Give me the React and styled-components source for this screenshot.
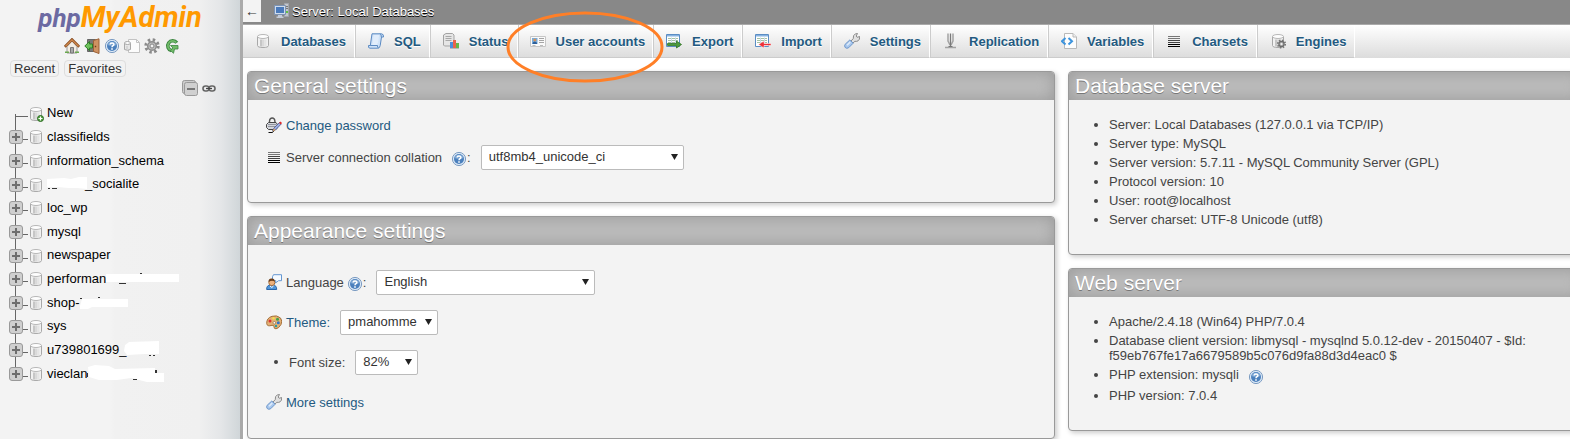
import React from "react";
import styled, { createGlobalStyle } from "styled-components";

const GlobalStyle = createGlobalStyle`
  * { box-sizing: border-box; }
  body {
    margin: 0;
    background: #fff;
    color: #444;
    font: 13px/15px "Liberation Sans", Arial, sans-serif;
  }
  ul { list-style: none; margin: 0; padding: 0; }
  a { text-decoration: none; color: #235a81; }
  svg { display: block; flex: none; }
`;

/* ---------- Icons (16 x 16 unless noted) ---------- */

const Svg = ({ children, w = 16, h = 16 }) => (
  <svg width={w} height={h} viewBox={`0 0 ${w} ${h}`} aria-hidden="true">
    {children}
  </svg>
);

const Cylinder = () => (
  <>
    <path d="M2.500 3.500v9c0 1.400 2.200 2 5.500 2s5.500-.6 5.500-2v-9" fill="#f1f1f1" stroke="#a8a8a8" />
    <path d="M5 6.500h2.500V13.500H5z" fill="#c6c6c6" />
    <path d="M7.500 6.500h2V13.500h-2z" fill="#d9d9d9" />
    <path d="M9.500 6.500h2V13h-2z" fill="#e4e4e4" />
    <ellipse cx="8" cy="3.500" rx="5.500" ry="2" fill="#fdfdfd" stroke="#b8b8b8" />
  </>
);

const DatabaseIcon = () => <Svg><Cylinder /></Svg>;

const DatabaseAddIcon = () => (
  <Svg>
    <Cylinder />
    <circle cx="12.500" cy="12.500" r="3" fill="#4f9f3f" stroke="#2f6d25" />
    <path d="M12.500 10.500v4M10.500 12.500h4" stroke="#fff" strokeWidth="1.200" />
  </Svg>
);

const EnginesIcon = () => (
  <Svg>
    <Cylinder />
    <circle cx="11.500" cy="11" r="3.800" fill="none" stroke="#777" strokeWidth="1.600" strokeDasharray="1.500 1.480" />
    <circle cx="11.500" cy="11" r="2.600" fill="#aaa" stroke="#6c6c6c" strokeWidth="1.200" />
    <circle cx="11.500" cy="11" r="1.100" fill="#f3f3f3" />
  </Svg>
);

const HomeIcon = () => (
  <Svg>
    <path d="M3 8.500 8 3l5 5.500V15H3z" fill="#f3ede4" stroke="#999" />
    <path d="M1 13.500h4v1.500H1zM11 13.500h4v1.500h-4z" fill="#6aa84f" />
    <path d="M6.500 9.500h3V15h-3z" fill="#a8a8a8" stroke="#777" />
    <path d="M.8 8.800 8 1.500l7.200 7.300" fill="none" stroke="#8a4d20" strokeWidth="2.600" />
    <path d="M1.500 8.200 8 1.800l6.500 6.400" fill="none" stroke="#d08a4e" strokeWidth="1.200" />
  </Svg>
);

const ExitIcon = () => (
  <Svg>
    <path d="M3.500 1.500h8v12h-8z" fill="#777" stroke="#666" />
    <path d="M9.500 2.500 15 .8v14.700l-5.500-2z" fill="#cf9262" stroke="#9b6136" />
    <path d="M10.800 8.500h1.400" stroke="#6b3c18" strokeWidth="1.500" />
    <path d="M.8 8 5.500 3.500V6H8.500v4H5.500v2.500z" fill="#6cc05a" stroke="#2f7d28" />
  </Svg>
);

const HelpIcon = () => (
  <Svg>
    <circle cx="8" cy="8" r="6.600" fill="#dbe8f6" stroke="#7c9cc2" />
    <circle cx="8" cy="8" r="5" fill="#4b80bd" />
    <path d="M3.300 7a5 5 0 0 1 9.400 0q-4.700 2-9.400 0" fill="#7ba5d3" />
    <path d="M6.100 6.500C6.100 4.500 9.900 4.400 9.900 6.400 9.900 7.700 8 7.700 8 9.200" fill="none" stroke="#fff" strokeWidth="1.500" />
    <path d="M7.200 10.300h1.600v1.500H7.200z" fill="#fff" />
  </Svg>
);

const DocsIcon = () => (
  <Svg>
    <path d="M4.500 1.500h8l3 3v10h-11z" fill="#fcfcfc" stroke="#c3c3c3" />
    <path d="M12.500 1.500v3h3" fill="none" stroke="#c3c3c3" />
    <path d="M.5 5v6.500q3 1.500 6 0V5" fill="#e6e6e6" stroke="#a8a8a8" />
    <ellipse cx="3.500" cy="5" rx="3" ry="1.500" fill="#fafafa" stroke="#a8a8a8" />
    <path d="M3 8v3" stroke="#c4c4c4" />
  </Svg>
);

const GearIcon = () => (
  <Svg>
    <circle cx="8" cy="8" r="6.200" fill="none" stroke="#8a8a8a" strokeWidth="3" strokeDasharray="2.430 2.430" />
    <circle cx="8" cy="8" r="4.300" fill="#bdbdbd" stroke="#8c8c8c" strokeWidth="1.500" />
    <circle cx="8" cy="8" r="2" fill="#f3f3f3" stroke="#888" />
  </Svg>
);

const ReloadIcon = () => (
  <Svg>
    <path d="M12.800 4.800A5 5 0 1 0 7.500 12.600" fill="none" stroke="#3b8540" strokeWidth="3.600" />
    <path d="M12.200 4.500A4.800 4.800 0 1 0 7.500 12.400" fill="none" stroke="#71bb68" strokeWidth="1.800" />
    <path d="M6.500 7.500h7.500v3.500h-3.500L9.500 15.300 6.500 12.500 9 10z" fill="#71bb68" stroke="#3b8540" strokeWidth=".8" />
  </Svg>
);

const CollapseIcon = () => (
  <Svg>
    <rect x=".5" y=".5" width="13" height="13" rx="2" fill="#ccc" stroke="#999" />
    <rect x="2.500" y="2.500" width="13" height="13" rx="2" fill="#d0d0d0" stroke="#999" />
    <path d="M5 9h8" stroke="#777" strokeWidth="2" />
  </Svg>
);

const LinkIcon = () => (
  <Svg w={14} h={16}>
    <rect x="1" y="6" width="6" height="5" rx="2.500" fill="none" stroke="#666" strokeWidth="1.600" />
    <rect x="7" y="6" width="6" height="5" rx="2.500" fill="none" stroke="#666" strokeWidth="1.600" />
    <path d="M4 8.500h6" stroke="#444" strokeWidth="1.300" />
  </Svg>
);

const ExpandIcon = () => (
  <Svg w={14} h={14}>
    <rect x=".5" y=".5" width="13" height="13" rx="2.500" fill="#cfcfcf" stroke="#999" />
    <path d="M3 7h8M7 3v8" stroke="#6e6e6e" strokeWidth="2" />
  </Svg>
);

const ServerIcon = () => (
  <Svg>
    <path d="M10.500.500h4v13h-4z" fill="#c3c6cb" stroke="#a0a5ad" />
    <path d="M11 3.500h3M11 5.500h3" stroke="#777" />
    <path d="M12 8h2v2h-2z" fill="#62c344" />
    <path d="M.5 2.500h11v9H.5z" fill="#cfdcec" stroke="#7d93b3" />
    <path d="M2 4h8v6H2z" fill="#4a7abb" />
    <path d="M4 12h4v1.500H4zM2.500 13.500h7v1.500h-7z" fill="#c3cbd8" />
  </Svg>
);

const SqlIcon = () => (
  <Svg>
    <path d="M4 .800h9.500q2.300.2 2 3.200h-2l-1.300 8.500q-.4 2.700-2.400 2.700H2Q0 15.200.5 12.500H2.300z" fill="#cfe2f8" stroke="#5b8ac2" />
    <path d="M13.300 4q.2-2.600-1.300-3.200M2.300 12.500H9.500q-.2 2.500 1 2.500" fill="none" stroke="#5b8ac2" />
    <path d="M5.500 3H11M5.200 5h5.500M5 7h5.500M4.700 9h5.500M4.400 11h5" stroke="#f2f8ff" />
  </Svg>
);

const StatusIcon = () => (
  <Svg>
    <path d="M3 .500h6.500l1.500 1.500v9.500L9 13H1.500L.5 12V2z" fill="#e6e6e6" stroke="#a3a3a3" />
    <path d="M2.500 3.500h6M2.500 5.500h6M2.500 7.500h6" stroke="#a8a8a8" />
    <path d="M7 9h3v6H7z" fill="#4b8fdd" />
    <path d="M10 7h3v8h-3z" fill="#e9644c" />
    <path d="M13 10h3v5h-3z" fill="#62b94b" />
    <path d="M7 15.500h9" stroke="#999" strokeWidth=".6" />
  </Svg>
);

const UsersIcon = () => (
  <Svg>
    <path d="M.5 3.500h15v10H.5z" fill="#fafafa" stroke="#c6c6c6" />
    <path d="M2 5h5.500v6H2z" fill="#78addd" />
    <circle cx="4.800" cy="7" r="1.500" fill="#d3925a" />
    <path d="M2.500 11q0-2.500 2.300-2.500T7.200 11z" fill="#2c5f9b" />
    <path d="M9 5.500h5M9 7.500h5M9 9.500h5" stroke="#a5a5a5" />
    <path d="M2.500 12.500h3M10 12.500h3" stroke="#bbb" />
  </Svg>
);

const Sheet = () => (
  <>
    <path d="M.5 1.500h13v12H.5z" fill="#fff" stroke="#5b8dc4" />
    <path d="M1 2h12v1.500H1z" fill="#86b2e0" />
    <path d="M2 5.500h10M2 7.500h10M2 9.500h10" stroke="#a3c2a3" />
    <path d="M5.500 4.500v7M9.500 4.500v7" stroke="#c9d8e8" />
  </>
);

const ExportIcon = () => (
  <Svg>
    <Sheet />
    <path d="M1.500 10.500h9V8l5 3.500-5 3.500v-2.500h-9z" fill="#4d9a3d" stroke="#2f7525" strokeWidth=".8" />
  </Svg>
);

const ImportIcon = () => (
  <Svg>
    <Sheet />
    <path d="M16 10.500H9V8L3.500 11.500 9 15v-2.500h7z" fill="#ee3038" stroke="#fff" strokeWidth=".5" />
  </Svg>
);

const WrenchIcon = () => (
  <Svg>
    <path d="M7 8 9.300 5.500Q8.800 2.200 11.300.9l2.200-.4-1.300 2.500 1 1.300 2.500-.8q.4 3-1.700 4.400-1.600.8-3.100.4L9 10z" fill="#e0e0e0" stroke="#8c8c8c" />
    <path d="M1.200 11.200 5.800 7l3.400 3.200-4.500 4.500q-2 1.300-3.500-.2-1.200-1.600 0-3.300z" fill="#a9c8ee" stroke="#6d96c9" />
    <path d="M3 12.300 6.300 9" stroke="#deebfa" strokeWidth="1.500" />
  </Svg>
);

const ReplicationIcon = () => (
  <Svg>
    <path d="M5 .500v7.500l2 4M10 .500V8l-2 4" fill="none" stroke="#a3a3a3" strokeWidth="1.500" />
    <path d="M7.500.500V13" stroke="#7a7a7a" strokeWidth="1.300" />
    <path d="M2 14.500h11" stroke="#a3a3a3" strokeWidth="1.500" />
    <path d="M5.500 13.500h4" stroke="#777" />
  </Svg>
);

const VariablesIcon = () => (
  <Svg>
    <path d="M3.500.500H12l3.500 3.500v11.500h-12z" fill="#fdfdfd" stroke="#b9b9b9" />
    <path d="M12 .500V4h3.500" fill="#eee" stroke="#b9b9b9" />
    <path d="M4.500 5 1 8.300l3.500 3.200M7.500 5 11 8.300l-3.500 3.200" fill="none" stroke="#3d94dd" strokeWidth="2" />
  </Svg>
);

const CharsetIcon = () => (
  <Svg>
    <path d="M2 3.500h12M2 5.500h12" stroke="#777" />
    <path d="M2 7.500h12M2 9.500h12" stroke="#444" />
    <path d="M2 11.500h12M2 13.500h12" stroke="#000" />
  </Svg>
);

const PasswordIcon = () => (
  <Svg>
    <path d="M3.500 6V4q.3-3 2.700-3t2.700 3v2" fill="none" stroke="#555" strokeWidth="1.400" />
    <path d="M2.500 5.500h7.500l1.500 2v3l-1.500 2H2.500l-2-2v-3z" fill="#d4d6dc" stroke="#454545" />
    <path d="M2 7.500h8.500M2 9.500h8.500" stroke="#92959e" />
    <path d="M6.500 14 8 11l5.500-5.500 1.700 1.500-5.700 6z" fill="#9cb0e4" stroke="#4d568e" strokeWidth=".8" />
    <path d="m13 6 1.500-1.500L16 6l-1.200 1.500z" fill="#e02a2a" />
    <path d="M2.500 15.500h4l1.500-2" fill="none" stroke="#111" />
    <path d="m6.500 14.500 1.500-3 1.500 1.500z" fill="#e3a65a" />
  </Svg>
);

const LanguageIcon = () => (
  <Svg>
    <path d="M7.500.700h8v6h-3l-3 2.300.4-2.300H6.500v-4z" fill="#f5faff" stroke="#6597d1" />
    <path d="M.7 15.500q-.3-4.500 4-4.500h2q4 0 4 4.500z" fill="#4f96dc" stroke="#2b65a8" />
    <circle cx="5.800" cy="8.600" r="3" fill="#efb27d" stroke="#a8703c" />
    <path d="M2.500 8q-.3-3.800 3.500-3.500 2.700 0 2.800 3-3-1.500-6.300.5z" fill="#6b3e1a" />
    <path d="m4 12 1.800 1.500L7.500 12" fill="none" stroke="#fff" />
  </Svg>
);

const PaletteIcon = () => (
  <Svg>
    <path d="M.7 9.500Q.5 4 6 2.300 11 .800 14.500 4q2.300 3 .5 6.500-2.200 4-5 4.300-2.200 0-2-2Q8 11 6 11.300q-5 1.600-5.300-1.800z" fill="#e3b075" stroke="#a5713a" />
    <circle cx="4" cy="7" r="1.500" fill="#dc2f2f" />
    <circle cx="7.500" cy="4.300" r="1.200" fill="#f2e04c" />
    <circle cx="11.500" cy="5.200" r="1.500" fill="#43a047" />
    <circle cx="12.300" cy="8.800" r="1.500" fill="#2f74c9" />
    <circle cx="8.300" cy="8.800" r="1.300" fill="#fff" stroke="#8e6a40" strokeWidth=".7" />
    <circle cx="10" cy="12" r="1.200" fill="#2e9c9c" />
  </Svg>
);

/* ---------- Navigation panel ---------- */

const Page = styled.div`
  display: grid;
  grid-template-columns: 243px minmax(0, 1fr);
  min-height: 100vh;
`;

const Sidebar = styled.nav`
  border-right: 3px solid #aaa;
  background: linear-gradient(to right, #f3f3f3 0%, #f3f3f3 46%, #f1f1f1 48%, #f0f0f0 83%, #e4e6e8 92%, #d0d6d9 100%);
`;

const Logo = styled.a`
  display: flex;
  justify-content: center;
  align-items: baseline;
  height: 36px;
  font: italic bold 29px/34px Roboto, sans-serif;
  color: #ff9900;
`;

const LogoPrefix = styled.span`
  font-size: 26px;
  color: #6c6aa2;
`;

const IconBar = styled.div`
  display: flex;
  gap: 4px;
  padding: 2px 0 0 64px;
`;

const NavButtons = styled.div`
  display: flex;
  gap: 5px;
  padding: 6px 0 0 10px;
`;

const NavButton = styled.button`
  height: 17px;
  padding: 0 3px;
  border: 1px solid #ddd;
  border-radius: 4px;
  background: #f2f2f2;
  color: #333;
  font: inherit;
  line-height: 15px;
`;

const TreeTools = styled.div`
  display: flex;
  justify-content: flex-end;
  gap: 4px;
  padding: 3px 24px 0 0;
`;

const Tree = styled.ul`
  display: grid;
  grid-auto-rows: 1fr;
  height: 284px;
  margin-top: 6px;
`;

const TreeItem = styled.li`
  display: flex;
  align-items: center;
  padding-left: 9px;
`;

const Branch = styled.span`
  display: flex;
  align-items: center;
  align-self: stretch;
  width: 19px;
  background:
    linear-gradient(#666, #666) 6px ${(p) => (p.$first ? "100%" : "0")} / 1px ${(p) => (p.$first || p.$last ? "50%" : "100%")} no-repeat,
    linear-gradient(#666, #666) right 60% / 13px 1px no-repeat;
`;

const TreeLink = styled.a`
  display: flex;
  align-items: center;
  padding: 0 0 2px 3px;
  color: #000;
`;

const Toggle = styled.button`
  padding: 0;
  border: 0;
  background: none;
`;

const Blot = ({ width, shape, marks }) => (
  <svg width={width} height="16" viewBox={`0 0 ${width} 16`} overflow="visible" aria-hidden="true">
    <path d={shape} fill="#fff" />
    <path d={marks} fill="#333" />
  </svg>
);

const databases = [
  { name: "New" },
  { name: "classifields" },
  { name: "information_schema" },
  {
    after: "_socialite",
    blot: { width: 38, shape: "M0 3 17 2 24 3 32 1H40V13L30 12H22L10 11H0Z", marks: "M1 12h2v1h-2zM5 12h5v1h-5z" },
  },
  { name: "loc_wp" },
  { name: "mysql" },
  { name: "newspaper" },
  { name: "performan", blot: { width: 73, shape: "M0 4H73V12H0Z", marks: "M13 13h7v1h-7zM34 3h2v1h-2z" } },
  { name: "shop-", blot: { width: 48, shape: "M2 5H48V13H12L8 15H0V12Z", marks: "M0 4h2v1h-2zM18 3h2v1h-2z" } },
  { name: "sys" },
  { name: "u739801699_", blot: { width: 32, shape: "M-2 4 2 1 32 0V13L18 13 0 14 -3 10Z", marks: "M22 14h2v1h-2zM26 14h2v1h-2z" } },
  {
    name: "vieclan",
    blot: { width: 77, shape: "M1 2 8 0 22 1 28 4 68 3V8H77V17H60L44 13 30 15H12L2 12Z", marks: "M0 8h1v4h-1zM46 14h4v1h-4zM68 5h2v3h-2z" },
  },
];

/* ---------- Top bar and tabs ---------- */

const Main = styled.main`
  overflow: hidden;
`;

const TopBar = styled.header`
  display: flex;
  align-items: flex-start;
  height: 24px;
  background: #888;
`;

const BackButton = styled.button`
  width: 18px;
  height: 22px;
  padding: 0;
  border: 0;
  background: #f3f3f3;
  color: #333;
  font: 14px/20px "Liberation Sans", Arial, sans-serif;
`;

const Breadcrumb = styled.a`
  display: flex;
  align-items: center;
  gap: 2px;
  height: 22px;
  margin-left: 13px;
  color: #fff;
  text-shadow: 0 1px 0 #000;
`;

const Tabs = styled.ul`
  display: flex;
  height: 34px;
  border-top: 1px solid #aaa;
  background: linear-gradient(#fff, #dcdcdc);
`;

const Tab = styled.li`
  position: relative;
  border-bottom: 1px solid #ccc;
  border-right: 1px solid #fff;

  & + & {
    border-left: 1px solid #ccc;
  }
`;

const TabLink = styled.a`
  display: flex;
  align-items: center;
  gap: 10px;
  height: 32px;
  padding: ${(p) => (p.$tight ? "0 7px 0 11px" : "0 8px 0 12px")};
  font-weight: bold;
  white-space: nowrap;
  text-shadow: 0 1px 0 #fff;
`;

const Ring = styled.svg`
  position: absolute;
  z-index: 1;
  top: -14px;
  left: -13px;
  pointer-events: none;
`;

const tabs = [
  ["Databases", DatabaseIcon],
  ["SQL", SqlIcon],
  ["Status", StatusIcon],
  ["User accounts", UsersIcon, true],
  ["Export", ExportIcon],
  ["Import", ImportIcon],
  ["Settings", WrenchIcon],
  ["Replication", ReplicationIcon],
  ["Variables", VariablesIcon],
  ["Charsets", CharsetIcon],
  ["Engines", EnginesIcon],
];

/* ---------- Panels ---------- */

/* The right-hand column runs past the edge of the window. */
const Columns = styled.div`
  display: grid;
  grid-template-columns: minmax(0, 808fr) minmax(0, 514fr);
  align-items: start;
  gap: 13px;
  margin: 13px -12px 0 4px;
`;

const Column = styled.div`
  display: grid;
  gap: 13px;
`;

const Card = styled.section`
  border: 1px solid #999;
  border-radius: 4px;
  background: #f3f3f3;
  box-shadow: 2px 2px 5px #ccc;
  overflow: hidden;
`;

const CardTitle = styled.h2`
  margin: 0;
  padding: 0 6px;
  background: #bbb;
  box-shadow: inset 0 0 15px #999;
  color: #fff;
  font-size: 21px;
  font-weight: normal;
  line-height: 28px;
  text-shadow: 0 1px 0 #777;
`;

const Rows = styled.ul`
  padding: ${(p) => (p.$roomy ? "17px 18px 16px" : "9px 18px 29px")};
`;

const Row = styled.li`
  display: flex;
  align-items: center;
  height: ${(p) => (p.$tall ? 40 : 32)}px;
  gap: 4px;
`;

const Bullet = styled.span`
  width: 4px;
  height: 4px;
  margin: 0 7px 0 8px;
  border-radius: 50%;
  background: #444;
`;

const Label = styled.label`
  display: flex;
  align-items: center;
  color: ${(p) => (p.$link ? "#235a81" : "#444")};
`;

const Help = styled.a`
  display: inline-flex;
  vertical-align: middle;
  margin: 0 0 -1px ${(p) => (p.$near ? 3 : 9)}px;
  padding-top: 2px;
`;

const SelectBox = styled.span`
  position: relative;
  width: ${(p) => p.$width}px;
  margin-left: 6px;

  svg {
    position: absolute;
    top: 9px;
    right: 6px;
    pointer-events: none;
  }
`;

const Select = styled.select`
  display: block;
  width: 100%;
  height: 25px;
  padding: 0 7px 1px;
  border: 1px solid #bbb;
  border-radius: 2px;
  appearance: none;
  background: #fff;
  color: #333;
  font: inherit;
`;

const Picker = ({ id, value, width }) => (
  <SelectBox $width={width}>
    <Select id={id} defaultValue={value}>
      <option>{value}</option>
    </Select>
    <svg width="7" height="6" viewBox="0 0 7 6" aria-hidden="true">
      <path d="M0 0h7L3.500 6z" fill="#222" />
    </svg>
  </SelectBox>
);

const Facts = styled.ul`
  padding: 15px 50px 25px 40px;
  list-style: disc;
`;

const Fact = styled.li`
  padding: 2px 0;
`;

const HelpLink = ({ near }) => (
  <Help href="#help" $near={near} aria-label="Documentation">
    <HelpIcon />
  </Help>
);

export default function App() {
  return (
    <Page>
      <GlobalStyle />
      <Sidebar>
        <Logo href="#home">
          <LogoPrefix>php</LogoPrefix>MyAdmin
        </Logo>
        <IconBar>
          <a href="#home" aria-label="Home"><HomeIcon /></a>
          <a href="#logout" aria-label="Log out"><ExitIcon /></a>
          <a href="#docs" aria-label="Documentation"><HelpIcon /></a>
          <a href="#mysql-docs" aria-label="MySQL documentation"><DocsIcon /></a>
          <a href="#panel-settings" aria-label="Panel settings"><GearIcon /></a>
          <a href="#reload" aria-label="Reload"><ReloadIcon /></a>
        </IconBar>
        <NavButtons>
          <NavButton>Recent</NavButton>
          <NavButton>Favorites</NavButton>
        </NavButtons>
        <TreeTools>
          <a href="#collapse" aria-label="Collapse all"><CollapseIcon /></a>
          <a href="#unlink" aria-label="Unlink from main panel"><LinkIcon /></a>
        </TreeTools>
        <Tree>
          {databases.map((db, i) => (
            <TreeItem key={i}>
              <Branch $first={i === 0} $last={i === databases.length - 1}>
                {i > 0 && (
                  <Toggle aria-label="Expand"><ExpandIcon /></Toggle>
                )}
              </Branch>
              {i === 0 ? <DatabaseAddIcon /> : <DatabaseIcon />}
              <TreeLink href="#db">
                {db.name}
                {db.blot && <Blot {...db.blot} />}
                {db.after}
              </TreeLink>
            </TreeItem>
          ))}
        </Tree>
      </Sidebar>

      <Main>
        <TopBar>
          <BackButton aria-label="Hide panel">←</BackButton>
          <Breadcrumb href="#server">
            <ServerIcon />
            Server: Local Databases
          </Breadcrumb>
        </TopBar>
        <Tabs>
          {tabs.map(([name, Icon, circled]) => (
            <Tab key={name}>
              <TabLink href="#tab" $tight={circled}>
                <Icon />
                {name}
              </TabLink>
              {circled && (
                <Ring width="158" height="72" viewBox="0 0 158 72" aria-hidden="true">
                  <ellipse cx="79" cy="36" rx="77" ry="34" fill="none" stroke="#ff7f27" strokeWidth="3" />
                </Ring>
              )}
            </Tab>
          ))}
        </Tabs>

        <Columns>
          <Column>
            <Card>
              <CardTitle>General settings</CardTitle>
              <Rows>
                <Row>
                  <PasswordIcon />
                  <a href="#password">Change password</a>
                </Row>
                <Row>
                  <CharsetIcon />
                  <Label htmlFor="collation">Server connection collation<HelpLink />:</Label>
                  <Picker id="collation" value="utf8mb4_unicode_ci" width={203} />
                </Row>
              </Rows>
            </Card>
            <Card>
              <CardTitle>Appearance settings</CardTitle>
              <Rows $roomy>
                <Row $tall>
                  <LanguageIcon />
                  <Label htmlFor="language">Language<HelpLink near />:</Label>
                  <Picker id="language" value="English" width={219} />
                </Row>
                <Row $tall>
                  <PaletteIcon />
                  <Label htmlFor="theme" $link>Theme:</Label>
                  <Picker id="theme" value="pmahomme" width={98} />
                </Row>
                <Row $tall>
                  <Bullet />
                  <Label htmlFor="font-size">Font size:</Label>
                  <Picker id="font-size" value="82%" width={63} />
                </Row>
                <Row $tall>
                  <WrenchIcon />
                  <a href="#more">More settings</a>
                </Row>
              </Rows>
            </Card>
          </Column>

          <Column>
            <Card>
              <CardTitle>Database server</CardTitle>
              <Facts>
                <Fact>Server: Local Databases (127.0.0.1 via TCP/IP)</Fact>
                <Fact>Server type: MySQL</Fact>
                <Fact>Server version: 5.7.11 - MySQL Community Server (GPL)</Fact>
                <Fact>Protocol version: 10</Fact>
                <Fact>User: root@localhost</Fact>
                <Fact>Server charset: UTF-8 Unicode (utf8)</Fact>
              </Facts>
            </Card>
            <Card>
              <CardTitle>Web server</CardTitle>
              <Facts>
                <Fact>Apache/2.4.18 (Win64) PHP/7.0.4</Fact>
                <Fact>
                  Database client version: libmysql - mysqlnd 5.0.12-dev - 20150407 - $Id:
                  {" "}f59eb767fe17a6679589b5c076d9fa88d3d4eac0 $
                </Fact>
                <Fact>PHP extension: mysqli<HelpLink /></Fact>
                <Fact>PHP version: 7.0.4</Fact>
              </Facts>
            </Card>
          </Column>
        </Columns>
      </Main>
    </Page>
  );
}
